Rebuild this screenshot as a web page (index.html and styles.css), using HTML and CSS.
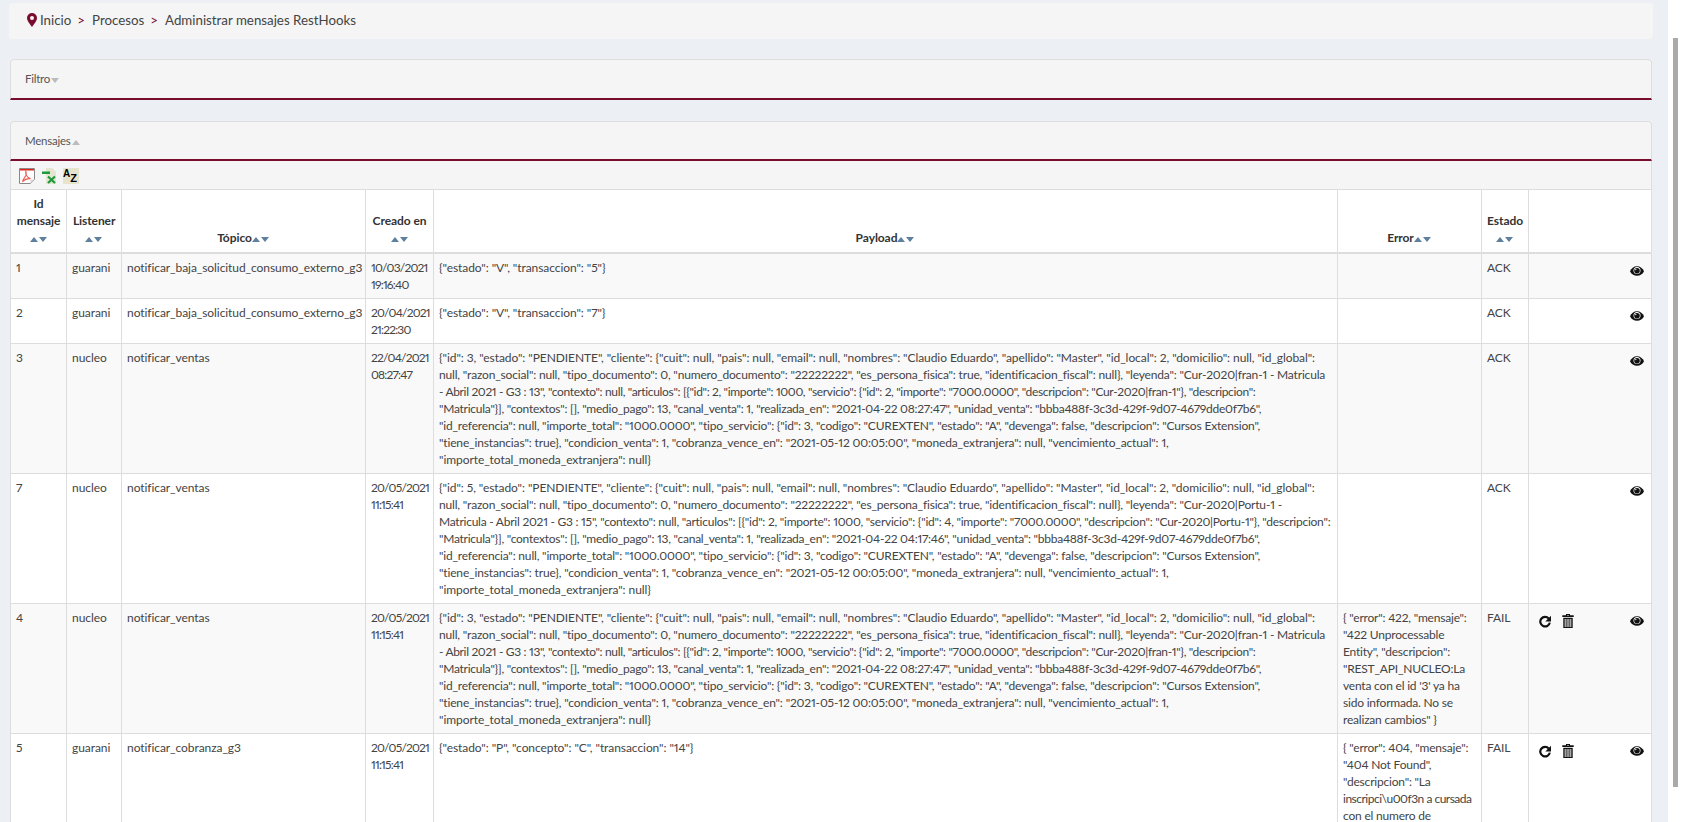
FILE: index.html
```html
<!DOCTYPE html>
<html lang="es">
<head>
    <meta charset="UTF-8">
    <title>Administrar mensajes RestHooks</title>
    <link rel="stylesheet" href="styles.css">
</head>
<body>
    <svg class="defs" width="0" height="0">
        <symbol id="i-eye" viewBox="0 0 14 12">
            <path fill="#111" d="M7 1.200C3.800 1.200 1.300 3.200 0 6.200 1.300 9 3.800 10.800 7 10.800s5.700-1.800 7-4.600C12.700 3.200 10.200 1.200 7 1.200z"/>
            <circle cx="7" cy="5.600" r="3.500" fill="#fff"/>
            <circle cx="7" cy="5.800" r="2.800" fill="#111"/>
            <circle cx="5.800" cy="4.600" r=".7" fill="#fff"/>
        </symbol>
        <symbol id="i-refresh" viewBox="0 0 12 13">
            <path fill="none" stroke="#111" stroke-width="2.200" d="M9.800 3.600A4.800 4.800 0 1 0 10.800 7.600"/>
            <path fill="#111" d="M12 .8v5.800H6.300z"/>
        </symbol>
        <symbol id="i-trash" viewBox="0 0 12 14">
            <path fill="#111" d="M4 0h4v1.200h3.700v1.800H.3V1.200H4zM5 .9v.5h2V.9z"/>
            <path fill="#111" d="M1.300 3.800h9.400V14H1.300z"/>
            <path stroke="#fff" stroke-width=".9" d="M3.200 5v8M5.100 5v8M6.900 5v8M8.800 5v8"/>
        </symbol>
    </svg>

    <div class="window">
        <main class="page">
            <nav class="breadcrumb">
                <svg class="pin" viewBox="0 0 10 14" width="10" height="14"><path fill-rule="evenodd" d="M5 0a5 5 0 0 1 5 5c0 3-3.300 6.500-5 9-1.700-2.500-5-6-5-9a5 5 0 0 1 5-5zm0 3a2 2 0 1 0 0 4 2 2 0 0 0 0-4z"/></svg>
                <a>Inicio</a><span class="sep">&gt;</span>
                <a>Procesos</a><span class="sep">&gt;</span>
                <a>Administrar mensajes RestHooks</a>
            </nav>

            <section class="panel panel-filter">
                <div class="panel-head">Filtro<span class="caret caret-down"></span></div>
            </section>

            <section class="panel">
                <div class="panel-head">Mensajes<span class="caret caret-up"></span></div>
                <div class="toolbar">
                    <svg class="tool" viewBox="0 0 16 16" width="16" height="16">
                        <path fill="#fff" stroke="#8a8a8a" d="M.5.500h15v11l-4 4H.500z"/>
                        <path fill="#d8d8d8" d="M11.500 15.500v-4h4z"/>
                        <path fill="#e2231a" d="M1 1h14v1.500H1z"/>
                        <path fill="none" stroke="#ee5a4e" stroke-width="1.200" d="M6.800 3.500c-.6 3 1.500 6 4.700 7.200-2.800-.4-5.500.3-7.700 2.700-.4-1 2.800-5 3.300-6.500.3-1.300 0-2.500-.3-3.400z"/>
                    </svg>
                    <svg class="tool tool-xls" viewBox="0 0 16 16" width="16" height="16">
                        <path fill="#e4e6cf" d="M4 0h6l4 4v12H4z"/>
                        <path fill="#1d9a3c" d="M0 3.500h8v2.500H0z"/>
                        <path stroke="#1d9a3c" stroke-width="2.200" d="M6 8.500l7 6.500M13 8.500l-7 6.500"/>
                    </svg>
                    <span class="tool-az"><span>A</span><span class="z">Z</span></span>
                </div>

                <table class="grid">
                    <colgroup>
                        <col class="c-id"><col class="c-listener"><col class="c-topico"><col class="c-fecha"><col class="c-payload"><col class="c-error"><col class="c-estado"><col class="c-acciones">
                    </colgroup>
                    <thead>
                        <tr>
                            <th>Id mensaje <span class="sort"><i class="up"></i><i class="down"></i></span></th>
                            <th>Listener <span class="sort"><i class="up"></i><i class="down"></i></span></th>
                            <th>Tópico<span class="sort"><i class="up"></i><i class="down"></i></span></th>
                            <th>Creado en <span class="sort"><i class="up"></i><i class="down"></i></span></th>
                            <th>Payload<span class="sort"><i class="up"></i><i class="down"></i></span></th>
                            <th>Error<span class="sort"><i class="up"></i><i class="down"></i></span></th>
                            <th>Estado <span class="sort"><i class="up"></i><i class="down"></i></span></th>
                            <th></th>
                        </tr>
                    </thead>
                    <tbody>
                        <tr>
                            <td>1</td>
                            <td>guarani</td>
                            <td>notificar_baja_solicitud_consumo_externo_g3</td>
                            <td class="fecha">10/03/2021 19:16:40</td>
                            <td>{"estado": "V", "transaccion": "5"}</td>
                            <td></td>
                            <td>ACK</td>
                            <td><div class="actions"><svg class="eye"><use href="#i-eye"/></svg></div></td>
                        </tr>
                        <tr>
                            <td>2</td>
                            <td>guarani</td>
                            <td>notificar_baja_solicitud_consumo_externo_g3</td>
                            <td class="fecha">20/04/2021 21:22:30</td>
                            <td>{"estado": "V", "transaccion": "7"}</td>
                            <td></td>
                            <td>ACK</td>
                            <td><div class="actions"><svg class="eye"><use href="#i-eye"/></svg></div></td>
                        </tr>
                        <tr>
                            <td>3</td>
                            <td>nucleo</td>
                            <td>notificar_ventas</td>
                            <td class="fecha">22/04/2021 08:27:47</td>
                            <td>
                                <span class="ln l1">{"id": 3, "estado": "PENDIENTE", "cliente": {"cuit": null, "pais": null, "email": null, "nombres": "Claudio Eduardo", "apellido": "Master", "id_local": 2, "domicilio": null, "id_global":</span>
                                <span class="ln l2">null, "razon_social": null, "tipo_documento": 0, "numero_documento": "22222222", "es_persona_fisica": true, "identificacion_fiscal": null}, "leyenda": "Cur-2020|fran-1 - Matricula</span>
                                <span class="ln l3">- Abril 2021 - G3 : 13", "contexto": null, "articulos": [{"id": 2, "importe": 1000, "servicio": {"id": 2, "importe": "7000.0000", "descripcion": "Cur-2020|fran-1"}, "descripcion":</span>
                                <span class="ln l4">"Matricula"}], "contextos": [], "medio_pago": 13, "canal_venta": 1, "realizada_en": "2021-04-22 08:27:47", "unidad_venta": "bbba488f-3c3d-429f-9d07-4679dde0f7b6",</span>
                                <span class="ln l5">"id_referencia": null, "importe_total": "1000.0000", "tipo_servicio": {"id": 3, "codigo": "CUREXTEN", "estado": "A", "devenga": false, "descripcion": "Cursos Extension",</span>
                                <span class="ln l6">"tiene_instancias": true}, "condicion_venta": 1, "cobranza_vence_en": "2021-05-12 00:05:00", "moneda_extranjera": null, "vencimiento_actual": 1,</span>
                                <span class="ln">"importe_total_moneda_extranjera": null}</span>
                            </td>
                            <td></td>
                            <td>ACK</td>
                            <td><div class="actions"><svg class="eye"><use href="#i-eye"/></svg></div></td>
                        </tr>
                        <tr>
                            <td>7</td>
                            <td>nucleo</td>
                            <td>notificar_ventas</td>
                            <td class="fecha">20/05/2021 11:15:41</td>
                            <td>
                                <span class="ln l1">{"id": 5, "estado": "PENDIENTE", "cliente": {"cuit": null, "pais": null, "email": null, "nombres": "Claudio Eduardo", "apellido": "Master", "id_local": 2, "domicilio": null, "id_global":</span>
                                <span class="ln l2">null, "razon_social": null, "tipo_documento": 0, "numero_documento": "22222222", "es_persona_fisica": true, "identificacion_fiscal": null}, "leyenda": "Cur-2020|Portu-1 -</span>
                                <span class="ln l3b">Matricula - Abril 2021 - G3 : 15", "contexto": null, "articulos": [{"id": 2, "importe": 1000, "servicio": {"id": 4, "importe": "7000.0000", "descripcion": "Cur-2020|Portu-1"}, "descripcion":</span>
                                <span class="ln l4">"Matricula"}], "contextos": [], "medio_pago": 13, "canal_venta": 1, "realizada_en": "2021-04-22 04:17:46", "unidad_venta": "bbba488f-3c3d-429f-9d07-4679dde0f7b6",</span>
                                <span class="ln l5">"id_referencia": null, "importe_total": "1000.0000", "tipo_servicio": {"id": 3, "codigo": "CUREXTEN", "estado": "A", "devenga": false, "descripcion": "Cursos Extension",</span>
                                <span class="ln l6">"tiene_instancias": true}, "condicion_venta": 1, "cobranza_vence_en": "2021-05-12 00:05:00", "moneda_extranjera": null, "vencimiento_actual": 1,</span>
                                <span class="ln">"importe_total_moneda_extranjera": null}</span>
                            </td>
                            <td></td>
                            <td>ACK</td>
                            <td><div class="actions"><svg class="eye"><use href="#i-eye"/></svg></div></td>
                        </tr>
                        <tr>
                            <td>4</td>
                            <td>nucleo</td>
                            <td>notificar_ventas</td>
                            <td class="fecha">20/05/2021 11:15:41</td>
                            <td>
                                <span class="ln l1">{"id": 3, "estado": "PENDIENTE", "cliente": {"cuit": null, "pais": null, "email": null, "nombres": "Claudio Eduardo", "apellido": "Master", "id_local": 2, "domicilio": null, "id_global":</span>
                                <span class="ln l2">null, "razon_social": null, "tipo_documento": 0, "numero_documento": "22222222", "es_persona_fisica": true, "identificacion_fiscal": null}, "leyenda": "Cur-2020|fran-1 - Matricula</span>
                                <span class="ln l3">- Abril 2021 - G3 : 13", "contexto": null, "articulos": [{"id": 2, "importe": 1000, "servicio": {"id": 2, "importe": "7000.0000", "descripcion": "Cur-2020|fran-1"}, "descripcion":</span>
                                <span class="ln l4">"Matricula"}], "contextos": [], "medio_pago": 13, "canal_venta": 1, "realizada_en": "2021-04-22 08:27:47", "unidad_venta": "bbba488f-3c3d-429f-9d07-4679dde0f7b6",</span>
                                <span class="ln l5">"id_referencia": null, "importe_total": "1000.0000", "tipo_servicio": {"id": 3, "codigo": "CUREXTEN", "estado": "A", "devenga": false, "descripcion": "Cursos Extension",</span>
                                <span class="ln l6">"tiene_instancias": true}, "condicion_venta": 1, "cobranza_vence_en": "2021-05-12 00:05:00", "moneda_extranjera": null, "vencimiento_actual": 1,</span>
                                <span class="ln">"importe_total_moneda_extranjera": null}</span>
                            </td>
                            <td class="err">{ "error": 422, "mensaje": "422 Unprocessable Entity", "descripcion": "REST_API_NUCLEO:La venta con el id '3' ya ha sido informada. No se realizan cambios" }</td>
                            <td>FAIL</td>
                            <td><div class="actions"><svg class="refresh"><use href="#i-refresh"/></svg><svg class="trash"><use href="#i-trash"/></svg><svg class="eye"><use href="#i-eye"/></svg></div></td>
                        </tr>
                        <tr>
                            <td>5</td>
                            <td>guarani</td>
                            <td>notificar_cobranza_g3</td>
                            <td class="fecha">20/05/2021 11:15:41</td>
                            <td>{"estado": "P", "concepto": "C", "transaccion": "14"}</td>
                            <td class="err">
                                <span class="ln">{ "error": 404, "mensaje":</span>
                                <span class="ln">"404 Not Found",</span>
                                <span class="ln">"descripcion": "La</span>
                                <span class="ln l-esc">inscripci\u00f3n a cursada</span>
                                <span class="ln">con el numero de</span>
                            </td>
                            <td>FAIL</td>
                            <td><div class="actions"><svg class="refresh"><use href="#i-refresh"/></svg><svg class="trash"><use href="#i-trash"/></svg><svg class="eye"><use href="#i-eye"/></svg></div></td>
                        </tr>
                    </tbody>
                </table>
            </section>
        </main>
        <div class="rail"><div class="thumb"></div></div>
    </div>
</body>
</html>
```

FILE: styles.css
```css
html, body {
    margin: 0;
    height: 100%;
    overflow: hidden;
}
body {
    font-family: Lato, "Noto Sans", sans-serif;
    font-size: 12px;
    line-height: 17px;
    letter-spacing: -0.07px;
    font-variant-numeric: proportional-nums;
    color: #444;
    background: #ecf0f5;
}
.defs {
    display: none;
}
.window {
    display: flex;
    height: 100vh;
}
.page {
    flex: 1;
    min-width: 0;
    height: 100%;
    overflow: hidden;
    padding: 3px 15px 0 9px;
    box-sizing: border-box;
}
.rail {
    width: 14px;
    background: #fff;
}
.thumb {
    width: 5px;
    height: 749px;
    margin: 38px 0 0 5px;
    background: #aaa;
}

/* breadcrumb */
.breadcrumb {
    display: flex;
    align-items: center;
    height: 36px;
    padding: 0 0 2px 18px;
    margin-bottom: 20px;
    background: #f5f5f5;
    border-radius: 4px;
    font-size: 13.3px;
    letter-spacing: 0;
    box-sizing: border-box;
}
.pin {
    fill: #7a0d2e;
    margin-right: 3px;
}
.sep {
    color: #7a0d2e;
    margin: 0 7px 0 6px;
}

/* panels */
.panel {
    margin: 0 1px 21px;
    background: #f5f5f5;
}
.panel-head {
    height: 37px;
    padding-left: 14px;
    line-height: 37px;
    font-size: 11.5px;
    letter-spacing: -0.25px;
    background: #f5f5f5;
    border: 1px solid #ddd;
    border-bottom: 2px solid #7a0d2e;
    border-radius: 4px 4px 0 0;
    color: #555;
}
.panel-filter .panel-head {
    height: 38px;
}
.caret {
    display: inline-block;
    margin-left: 1px;
    vertical-align: middle;
    border-left: 4px solid transparent;
    border-right: 4px solid transparent;
}
.caret-down {
    border-top: 5px solid #bbb;
}
.caret-up {
    border-bottom: 5px solid #bbb;
}
.toolbar {
    display: flex;
    align-items: center;
    height: 28px;
    padding: 1px 0 0 8px;
    border-left: 1px solid #ddd;
    border-right: 1px solid #ddd;
    box-sizing: border-box;
}
.tool-xls {
    margin: 0 5px 0 7px;
}
.tool-az {
    display: flex;
    width: 16px;
    height: 16px;
    background: #e6e4cc;
    color: #000;
    font: bold 10px/12px "Liberation Sans", sans-serif;
}
.tool-az .z {
    font-size: 11px;
    margin-top: 4px;
}

/* table */
.grid {
    width: 100%;
    table-layout: fixed;
    border-collapse: collapse;
    background: #fff;
}
.c-id { width: 56px; }
.c-listener { width: 55px; }
.c-topico { width: 244px; }
.c-fecha { width: 68px; }
.c-error { width: 144px; }
.c-estado { width: 47px; }
.c-acciones { width: 123px; }
.grid th, .grid td {
    padding: 5px;
    border: 1px solid #ddd;
}
.grid th {
    padding-bottom: 6px;
    text-align: center;
    vertical-align: bottom;
    border-bottom-width: 2px;
    color: #333;
}
.grid td {
    vertical-align: top;
}
.grid tbody tr:nth-child(odd) {
    background: #f9f9f9;
}
.fecha {
    letter-spacing: -0.8px;
}
.err {
    letter-spacing: -0.2px;
}

.ln {
    display: block;
    white-space: nowrap;
}
.l2 { letter-spacing: -0.175px; }
.l3 { letter-spacing: -0.34px; }
.l3b { letter-spacing: -0.245px; }
.l4 { letter-spacing: -0.25px; }
.l5 { letter-spacing: -0.18px; }
.l6 { letter-spacing: -0.15px; }
.l-esc { letter-spacing: -0.5px; }

.sort {
    display: inline-block;
    white-space: nowrap;
}
.sort i {
    display: inline-block;
    margin-right: 1px;
    border-left: 4px solid transparent;
    border-right: 4px solid transparent;
}
.sort .up {
    border-bottom: 5px solid #5f7f9f;
}
.sort .down {
    border-top: 5px solid #5f7f9f;
}
.actions {
    display: flex;
    align-items: flex-start;
    padding: 6px 2px 0 5px;
}
.refresh {
    width: 12px;
    height: 13px;
}
.trash {
    width: 12px;
    height: 14px;
    margin: -1px 0 0 11px;
}
.eye {
    width: 14px;
    height: 12px;
    margin-left: auto;
}
```
